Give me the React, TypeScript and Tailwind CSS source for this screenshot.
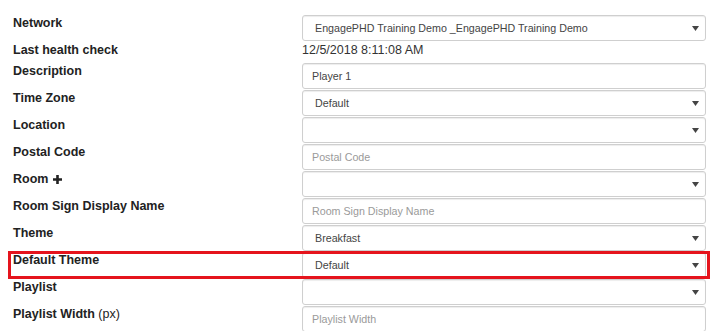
import React from "react";

type Field = {
  label: string;
  suffix?: string;
  plus?: boolean;
  kind: "select" | "input" | "text";
  value?: string;
  placeholder?: string;
  highlight?: boolean;
};

const fields: Field[] = [
  { label: "Network", kind: "select", value: "EngagePHD Training Demo _EngagePHD Training Demo" },
  { label: "Last health check", kind: "text", value: "12/5/2018 8:11:08 AM" },
  { label: "Description", kind: "input", value: "Player 1" },
  { label: "Time Zone", kind: "select", value: "Default" },
  { label: "Location", kind: "select", value: "" },
  { label: "Postal Code", kind: "input", placeholder: "Postal Code" },
  { label: "Room", kind: "select", value: "", plus: true },
  { label: "Room Sign Display Name", kind: "input", placeholder: "Room Sign Display Name" },
  { label: "Theme", kind: "select", value: "Breakfast" },
  { label: "Default Theme", kind: "select", value: "Default", highlight: true },
  { label: "Playlist", kind: "select", value: "" },
  { label: "Playlist Width", suffix: "(px)", kind: "input", placeholder: "Playlist Width" },
];

function Caret() {
  return (
    <svg width="7" height="5" viewBox="0 0 7 5" className="absolute right-[6px] top-[10px]">
      <path d="M0 0 L7 0 L3.5 5 Z" fill="#444" />
    </svg>
  );
}

function Control({ f }: { f: Field }) {
  if (f.kind === "text") {
    return <div className="pt-[1px] text-[12.5px] leading-[15px] text-[#333]">{f.value}</div>;
  }
  const box =
    "relative h-[26px] w-full rounded-[3px] border border-[#cfcfcf] bg-white text-[10.7px] leading-[24px] shadow-[inset_0_1px_1px_rgba(0,0,0,0.075)]";
  if (f.kind === "select") {
    return (
      <div className={`${box} pl-[12px] text-[#444]`}>
        {f.value}
        <Caret />
      </div>
    );
  }
  return (
    <div className={`${box} pl-[9px] ${f.value ? "text-[#444]" : "text-[#9a9a9a]"}`}>
      {f.value || f.placeholder}
    </div>
  );
}

export default function App() {
  return (
    <div className="h-[331px] w-[716px] overflow-hidden bg-white pt-[15px] font-['Liberation_Sans',Arial,sans-serif]">
      {fields.map((f) => (
        <div
          key={f.label}
          className={`relative mb-[1px] flex ${f.kind === "text" ? "h-[20px]" : "h-[26px]"}`}
        >
          <div className="w-[302px] shrink-0 pl-[13px] pt-[1px] text-[12.5px] font-bold leading-[15px] text-[#222]">
            {f.label}
            {f.suffix && <span className="font-normal"> {f.suffix}</span>}
            {f.plus && (
              <svg width="9" height="9" viewBox="0 0 9 9" className="ml-[5px] inline-block align-[-1px]">
                <path d="M3.2 0h2.6v3.2H9v2.6H5.8V9H3.2V5.8H0V3.2h3.2z" fill="#222" />
              </svg>
            )}
          </div>
          <div className="w-[404px] shrink-0">
            <Control f={f} />
          </div>
          {f.highlight && (
            <div className="pointer-events-none absolute left-[8px] top-[-1px] h-[28px] w-[702px] border-[3px] border-[#e5141d]" />
          )}
        </div>
      ))}
    </div>
  );
}
